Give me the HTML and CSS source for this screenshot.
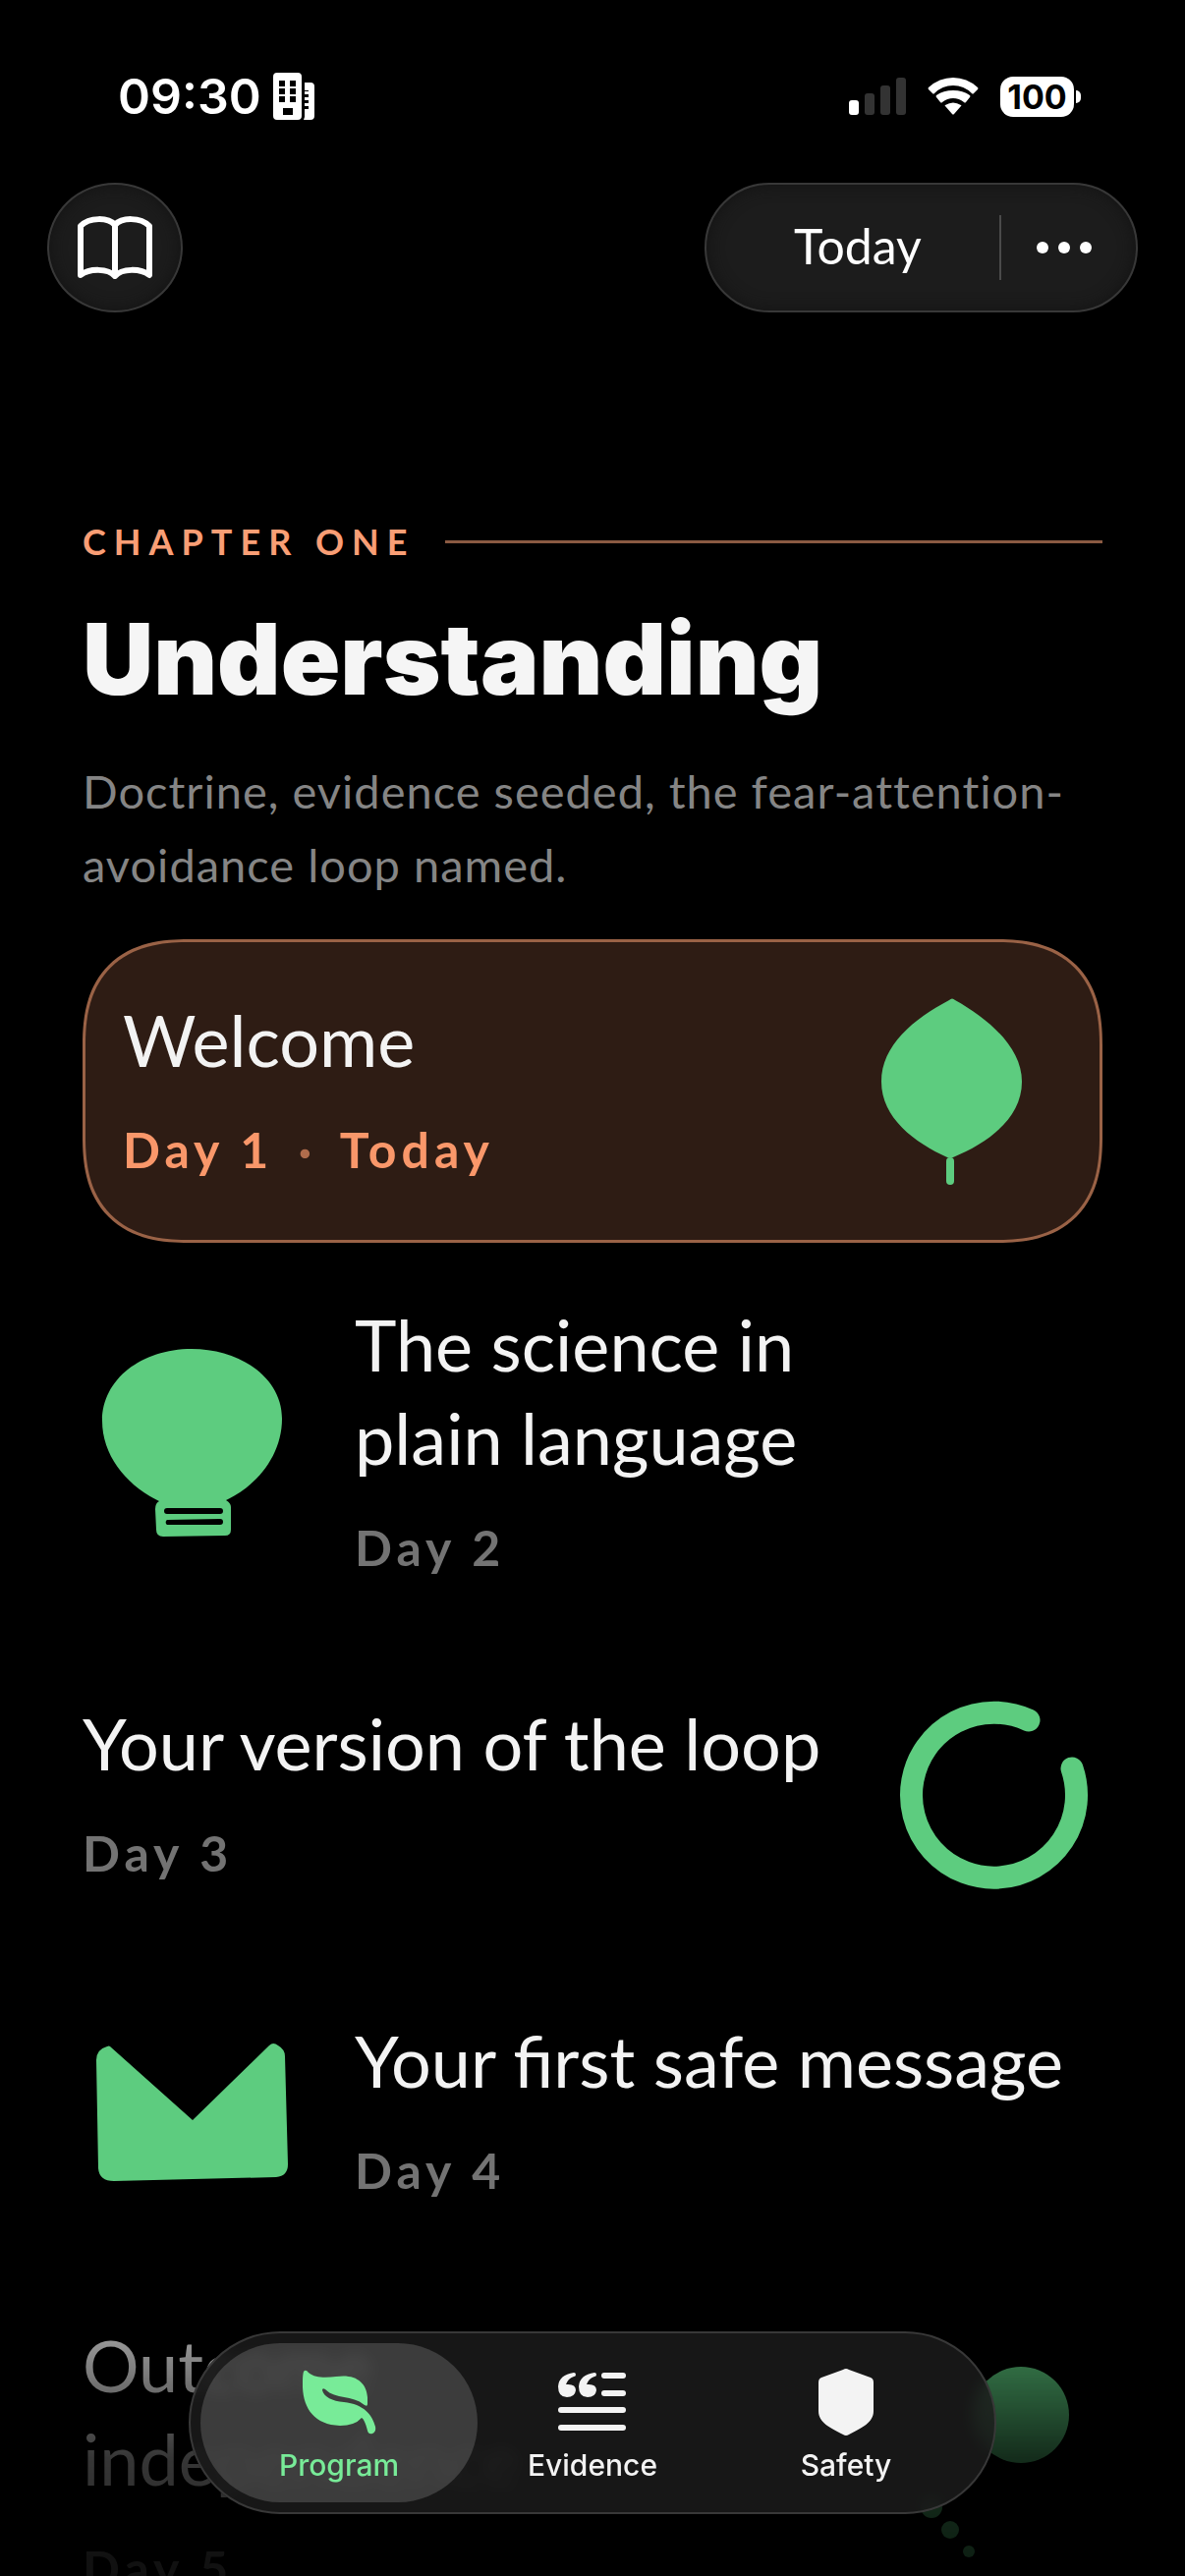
FILE: index.html
```html
<!DOCTYPE html>
<html lang="en">
<head>
    <meta charset="UTF-8">
    <meta name="viewport" content="width=device-width, initial-scale=1.0">
    <title>Program</title>
    <link rel="stylesheet" href="styles.css">
</head>
<body>
    <div class="status-bar">
        <div class="status-left">
            <span class="clock">09:30</span>
            <svg width="42" height="48" viewBox="0 0 42 48" fill="#fff">
                <path fill-rule="evenodd" d="M4 0H25a4 4 0 0 1 4 4V44a4 4 0 0 1-4 4H4a4 4 0 0 1-4-4V4a4 4 0 0 1 4-4ZM6 8v6h6V8ZM17 8v6h6V8ZM6 16v6h6v-6ZM17 16v6h6v-6ZM6 24v6h6v-6ZM17 24v6h6v-6ZM10 36v7h10v-7Z"/>
                <path d="M32 10h6a4 4 0 0 1 4 4V44a4 4 0 0 1-4 4H31l1-3V37h4v-3h-4v-3h4v-3h-4v-3h4v-3h-4v-3h4v-1h-4Z"/>
            </svg>
        </div>
        <div class="status-right">
            <svg width="58" height="38" viewBox="0 0 58 38" fill="#333">
                <rect x="0" y="23" width="10" height="15" rx="3" fill="#fff"/>
                <rect x="16" y="16" width="10" height="22" rx="3"/>
                <rect x="32" y="8" width="10" height="30" rx="3"/>
                <rect x="48" y="0" width="10" height="38" rx="3"/>
            </svg>
            <svg width="52" height="38" viewBox="0 0 52 38" fill="#fff">
                <path d="M1 12Q0 11 1 10Q12 0 26 0T51 10Q52 11 51 12L47 16Q46 17 45 16Q37 8 26 8T7 16Q6 17 5 16Z"/>
                <path d="M9 20Q8 19 9 18Q16 13 26 13T43 18Q44 19 43 20L39 25Q38 26 37 25Q32 21 26 21T15 25Q14 26 13 25Z"/>
                <path d="M18 29Q17 28 18 28Q26 23 34 28Q35 28 34 29L27 37Q26 38 25 37Z"/>
            </svg>
            <div class="battery">100</div>
        </div>
    </div>

    <header class="toolbar">
        <button class="glass book-btn" aria-label="Library">
            <svg width="76" height="64" viewBox="0 0 76 64" fill="none" stroke="#fff" stroke-width="6" stroke-linecap="round" stroke-linejoin="round">
                <path d="M38 9C31 1 12 1 3 10V60C12 53 31 53 38 61C45 53 64 53 73 60V10C64 1 45 1 38 9ZV60"/>
            </svg>
        </button>
        <div class="glass actions">
            <button class="today-btn">Today</button>
            <button class="more-btn" aria-label="More">
                <svg width="58" height="12" viewBox="0 0 58 12" fill="#fff">
                    <circle cx="7" cy="6" r="6"/><circle cx="29" cy="6" r="6"/><circle cx="51" cy="6" r="6"/>
                </svg>
            </button>
        </div>
    </header>

    <main class="content">
        <p class="eyebrow">CHAPTER ONE</p>
        <h1>Understanding</h1>
        <p class="intro">Doctrine, evidence seeded, the fear-attention-avoidance loop named.</p>

        <div class="lessons">
            <a class="lesson current" href="#">
                <div class="lesson-text">
                    <h2>Welcome</h2>
                    <p class="day">Day 1 <span class="dot">·</span> Today</p>
                </div>
                <svg class="art" viewBox="0 0 225 225">
                    <path d="M110 20Q113 17 116 20C150 39 184 68 184 103C184 140 150 165 114 180Q111 181 108 180C75 165 41 140 41 103C41 66 74 39 110 20Z"/>
                    <path d="M111 184L111 204" stroke="#5dcc7f" stroke-width="8" stroke-linecap="round"/>
                </svg>
            </a>
            <a class="lesson" href="#">
                <svg class="art" viewBox="0 0 225 225">
                    <path fill-rule="evenodd" d="M111 17C160 17 203 46 203 88C203 125 178 156 146 171Q151 174 151 178V201Q151 207 145 207L82 208Q75 208 75 201L74 180Q74 174 78 172C45 156 20 126 20 90C20 48 60 17 111 17ZM86 179a3 3 0 0 0 0 6h54a3 3 0 0 0 0-6ZM86 191a3 3 0 0 0 0 5h54a3 3 0 0 0 0-6Z"/>
                </svg>
                <div class="lesson-text">
                    <h2>The science in<br>plain language</h2>
                    <p class="day">Day 2</p>
                </div>
            </a>
            <a class="lesson" href="#">
                <div class="lesson-text">
                    <h2>Your version of the loop</h2>
                    <p class="day">Day 3</p>
                </div>
                <svg class="art" viewBox="0 0 225 225">
                    <path d="M150 37A84 84 0 1 0 194 86" fill="none" stroke="#5dcc7f" stroke-width="23" stroke-linecap="round"/>
                </svg>
            </a>
            <a class="lesson" href="#">
                <svg class="art" viewBox="0 0 225 225">
                    <path d="M28 46L112 121L190 45Q194 41 199 45Q206 49 206 56L209 166Q209 178 197 179L32 183Q17 183 16 170L14 60Q14 49 25 46Q27 45 28 46Z"/>
                </svg>
                <div class="lesson-text">
                    <h2>Your first safe message</h2>
                    <p class="day">Day 4</p>
                </div>
            </a>
            <a class="lesson" href="#">
                <div class="lesson-text">
                    <h2>Outcome<br>independence</h2>
                    <p class="day">Day 5</p>
                </div>
                <svg class="art" viewBox="0 0 225 225">
                    <circle cx="142" cy="63" r="49"/>
                    <circle cx="51" cy="157" r="11"/>
                    <circle cx="70" cy="180" r="9"/>
                    <circle cx="89" cy="202" r="6"/>
                </svg>
            </a>
        </div>
    </main>

    <div class="fade"></div>
    <nav class="tabs">
        <a class="tab active" href="#">
            <svg width="75" height="68" viewBox="0 0 75 66" fill="#78eb98">
                <path d="M1 2Q3-1 6 3C13 9 25 8 34 7C54 4 65 13 66 28V35Q66 38 63 36C50 25 34 31 23 20Q20 18 20 21C22 28 30 32 42 33C62 35 71 46 74 58Q75 63 71 65Q67 66 66 62C64 54 62 50 60 49Q53 57 38 57C10 56-1 37 0 12Q0 5 1 2Z"/>
            </svg>
            <span>Program</span>
        </a>
        <a class="tab" href="#">
            <svg width="70" height="68" viewBox="0 0 70 68" fill="#f3f3f3">
                <path d="M16 4Q18 4 18 6T16 8Q10 10 8 16Q18 15 18 22Q17 29 9 29Q0 29 0 18Q1 6 16 4Z"/>
                <path d="M37 4Q39 4 39 6T37 8Q31 10 29 16Q39 15 39 22Q38 29 30 29Q21 29 21 18Q22 6 37 4Z"/>
                <rect x="44" y="4" width="25" height="6" rx="3"/>
                <rect x="44" y="22" width="25" height="6" rx="3"/>
                <rect x="0" y="39" width="69" height="6" rx="3"/>
                <rect x="0" y="57" width="69" height="6" rx="3"/>
            </svg>
            <span>Evidence</span>
        </a>
        <a class="tab" href="#">
            <svg width="56" height="68" viewBox="0 0 56 68" fill="#f3f3f3">
                <path d="M25 1Q28-1 31 1L53 9Q56 10 56 14V43C56 55 44 60 31 67Q28 69 25 67C12 60 0 55 0 43V14Q0 10 3 9Z"/>
            </svg>
            <span>Safety</span>
        </a>
    </nav>
</body>
</html>
```

FILE: styles.css
```css
* { box-sizing: border-box; margin: 0; padding: 0; }
body {
    height: 100vh;
    overflow: hidden;
    display: flex;
    flex-direction: column;
    background-color: #000;
    color: #f3f3f3;
    font-family: Lato, sans-serif;
}
a { color: inherit; text-decoration: none; }
svg { display: block; flex: none; }
button { border: none; background: none; color: white; font-family: inherit; font-size: 50px; cursor: pointer; }

.status-bar {
    display: flex;
    justify-content: space-between;
    align-items: center;
    height: 186px;
    padding: 10px 106px 0 120px;
    font-family: Inter, sans-serif;
    color: white;
    flex: none;
}
.status-left { display: flex; align-items: center; gap: 12px; }
.status-right { display: flex; align-items: center; gap: 22px; }
.clock { font-size: 50px; font-weight: 600; }
.battery {
    position: relative;
    width: 75px;
    height: 41px;
    margin-right: 7px;
    border-radius: 13px;
    background-color: white;
    color: black;
    font-size: 34px;
    font-weight: 700;
    line-height: 41px;
    text-align: center;
}
.battery::after {
    content: "";
    position: absolute;
    right: -7px;
    top: 14px;
    width: 5px;
    height: 13px;
    border-radius: 0 6px 6px 0;
    background-color: white;
}

.toolbar {
    display: flex;
    justify-content: space-between;
    padding: 0 48px;
    flex: none;
}
.glass {
    height: 132px;
    background-color: #1c1c1c;
    border: 2px solid #383838;
    border-radius: 69px;
    box-shadow: inset 0 0 16px #131313;
}
.book-btn {
    display: flex;
    align-items: center;
    justify-content: center;
    width: 138px;
    border-radius: 50%;
}
.actions { display: flex; align-items: center; }
.today-btn { width: 300px; height: 66px; padding: 0 0 4px 10px; line-height: 60px; border-right: 2px solid #4a4a4a; }
.more-btn { width: 137px; height: 66px; padding-left: 35px; }

.content {
    flex: 1;
    min-height: 0;
    display: flex;
    flex-direction: column;
    gap: 38px;
    padding: 210px 84px 0;
}
.eyebrow {
    display: flex;
    align-items: center;
    gap: 30px;
    color: #f99e75;
    font-size: 36px;
    font-weight: 700;
    line-height: 46px;
    letter-spacing: 8px;
}
.eyebrow::after { content: ""; flex: 1; height: 3px; background-color: #8a5a42; }
h1 { font-family: Inter, sans-serif; font-size: 100px; font-weight: 900; line-height: 118px; color: #f5f5f5; }
.intro { font-size: 47px; font-weight: 400; line-height: 75px; letter-spacing: 1px; color: #858585; }

.lessons { display: flex; flex-direction: column; gap: 14px; }
.lesson {
    display: flex;
    align-items: center;
    gap: 52px;
    padding: 42px 0;
}
.lesson-text { flex: 1; display: flex; flex-direction: column; gap: 24px; }
.lesson h2 { font-size: 72px; font-weight: 400; line-height: 95px; }
.day { font-size: 50px; font-weight: 700; line-height: 81px; letter-spacing: 5px; color: #737373; }
.art { width: 225px; height: 225px; fill: #5dcc7f; }
.current {
    padding: 39px 38px;
    background-color: #2e1c14;
    border: 3px solid #9a6246;
    border-radius: 88px;
}
.current .day { color: #f9976a; }
.dot { color: #b06c4c; margin: 0 8px; }

/* smoother card corners where the browser can draw them */
@supports (corner-shape: squircle) {
    .current { border-radius: 108px; corner-shape: superellipse(1.3); }
}

/* content dims out under the tab bar */
.fade {
    position: fixed;
    left: 0;
    right: 0;
    bottom: 0;
    height: 300px;
    background: linear-gradient(rgba(0,0,0,0), rgba(0,0,0,0.38) 20%, rgba(0,0,0,0.78) 60%, rgba(0,0,0,0.86));
}
.tabs {
    position: fixed;
    left: 192px;
    right: 192px;
    bottom: 63px;
    display: flex;
    height: 186px;
    padding: 10px;
    background-color: rgba(28,28,28,0.82);
    border: 2px solid #383838;
    border-radius: 93px;
    backdrop-filter: blur(8px);
}
.tab {
    flex: 1;
    display: flex;
    flex-direction: column;
    align-items: center;
    gap: 10px;
    padding-top: 26px;
    border-radius: 81px;
    font-family: Inter, sans-serif;
    font-size: 30px;
    font-weight: 500;
    line-height: 40px;
}
.tab + .tab { margin-left: -24px; }
.active { background-color: rgba(255,255,255,0.16); color: #78eb98; }
```
